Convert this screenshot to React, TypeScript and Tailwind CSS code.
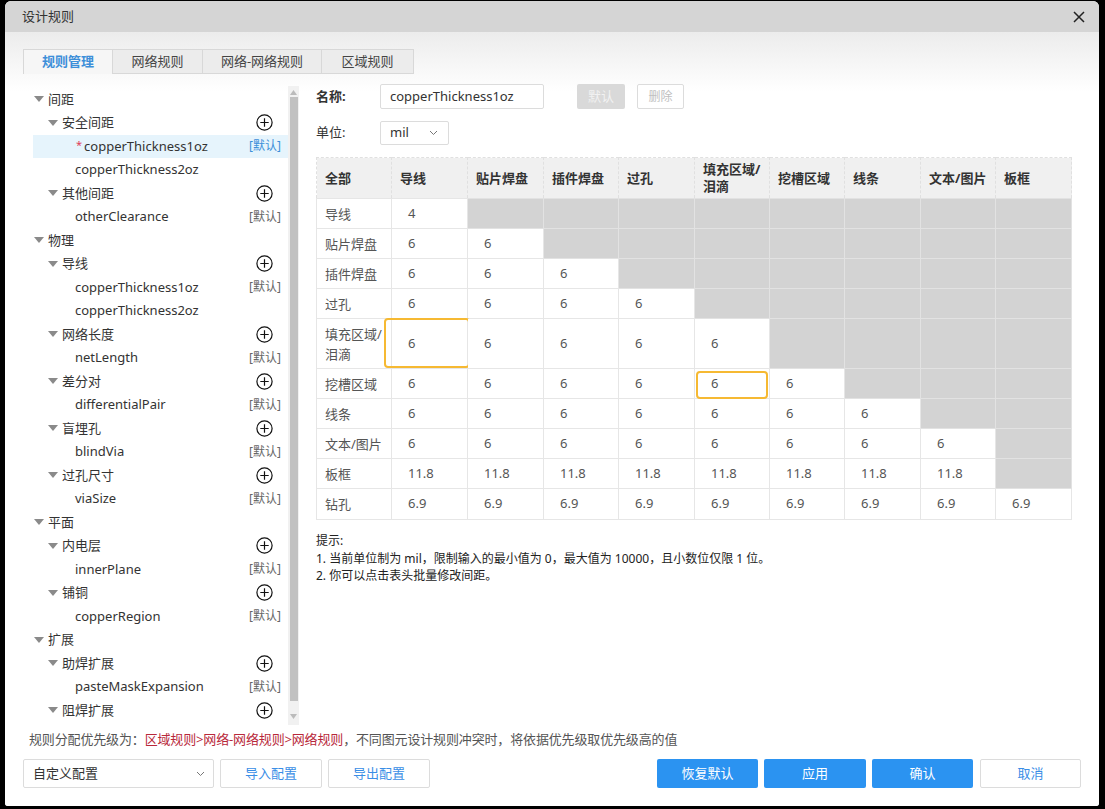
import React from "react";

const FONT = "[font-family:'Noto_Sans','Noto_Sans_CJK_SC',sans-serif]";

type TreeRow = { lv: number; text: string; plus?: boolean; tag?: string; sel?: boolean };

const tree: TreeRow[] = [
  { lv: 0, text: "间距" },
  { lv: 1, text: "安全间距", plus: true },
  { lv: 2, text: "copperThickness1oz", tag: "[默认]", sel: true },
  { lv: 2, text: "copperThickness2oz" },
  { lv: 1, text: "其他间距", plus: true },
  { lv: 2, text: "otherClearance", tag: "[默认]" },
  { lv: 0, text: "物理" },
  { lv: 1, text: "导线", plus: true },
  { lv: 2, text: "copperThickness1oz", tag: "[默认]" },
  { lv: 2, text: "copperThickness2oz" },
  { lv: 1, text: "网络长度", plus: true },
  { lv: 2, text: "netLength", tag: "[默认]" },
  { lv: 1, text: "差分对", plus: true },
  { lv: 2, text: "differentialPair", tag: "[默认]" },
  { lv: 1, text: "盲埋孔", plus: true },
  { lv: 2, text: "blindVia", tag: "[默认]" },
  { lv: 1, text: "过孔尺寸", plus: true },
  { lv: 2, text: "viaSize", tag: "[默认]" },
  { lv: 0, text: "平面" },
  { lv: 1, text: "内电层", plus: true },
  { lv: 2, text: "innerPlane", tag: "[默认]" },
  { lv: 1, text: "铺铜", plus: true },
  { lv: 2, text: "copperRegion", tag: "[默认]" },
  { lv: 0, text: "扩展" },
  { lv: 1, text: "助焊扩展", plus: true },
  { lv: 2, text: "pasteMaskExpansion", tag: "[默认]" },
  { lv: 1, text: "阻焊扩展", plus: true },
];

function Tri() {
  return (
    <svg width="10" height="6" viewBox="0 0 10 6" className="shrink-0">
      <path d="M0 0 L10 0 L5 6 Z" fill="#8a8a8a" />
    </svg>
  );
}

function Plus() {
  return (
    <svg width="17" height="17" viewBox="0 0 17 17">
      <circle cx="8.5" cy="8.5" r="7.6" fill="none" stroke="#111" strokeWidth="1.2" />
      <path d="M8.5 4.3 V12.7 M4.3 8.5 H12.7" stroke="#111" strokeWidth="1.2" />
    </svg>
  );
}

function Chevron() {
  return (
    <svg width="9" height="6" viewBox="0 0 9 6">
      <path d="M1 1 L4.5 4.5 L8 1" fill="none" stroke="#777" strokeWidth="1" />
    </svg>
  );
}

const cols = ["导线", "贴片焊盘", "插件焊盘", "过孔", "填充区域/泪滴", "挖槽区域", "线条", "文本/图片", "板框"];
const widths = [75, 76, 76, 75, 76, 75, 75, 76, 75, 76];

type Row = { label: React.ReactNode; h: number; vals: number; v: string };
const rows: Row[] = [
  { label: "导线", h: 30, vals: 1, v: "4" },
  { label: "贴片焊盘", h: 30, vals: 2, v: "6" },
  { label: "插件焊盘", h: 30, vals: 3, v: "6" },
  { label: "过孔", h: 30, vals: 4, v: "6" },
  { label: <>填充区域/<br />泪滴</>, h: 50, vals: 5, v: "6" },
  { label: "挖槽区域", h: 30, vals: 6, v: "6" },
  { label: "线条", h: 30, vals: 7, v: "6" },
  { label: "文本/图片", h: 30, vals: 8, v: "6" },
  { label: "板框", h: 30, vals: 8, v: "11.8" },
  { label: "钻孔", h: 31, vals: 9, v: "6.9" },
];

export default function App() {
  return (
    <div className={`w-[1105px] h-[809px] bg-black ${FONT} overflow-hidden`}>
      <div className="ml-[5px] mt-[1px] w-[1094px] h-[805px] rounded-t-[6px] rounded-b-[3px] overflow-hidden bg-white flex flex-col">
        {/* title bar */}
        <div className="h-[31px] bg-[#d5d5d5] flex items-center justify-between pl-[17px] pr-[14px] shrink-0">
          <span className="text-[13px] text-[#333]">设计规则</span>
          <svg width="12" height="12" viewBox="0 0 12 12">
            <path d="M1 1 L11 11 M11 1 L1 11" stroke="#222" strokeWidth="1.5" />
          </svg>
        </div>
        {/* body */}
        <div className="flex-1 flex flex-col bg-[linear-gradient(#ececec_0px,#ffffff_60px,#ffffff_100%)] px-[18px] pt-[17px]">
          {/* tabs */}
          <div className="flex h-[25px] shrink-0">
            <div className="w-[90px] flex items-center justify-center bg-[#f6f6f6] border border-b-0 border-[#d8d8d8] text-[13px] font-bold text-[#3d8fd9]">规则管理</div>
            <div className="w-[90px] flex items-center justify-center bg-[#ececec] border-t border-r border-b border-[#d8d8d8] text-[13px] text-[#444]">网络规则</div>
            <div className="w-[119px] flex items-center justify-center bg-[#ececec] border-t border-r border-b border-[#d8d8d8] text-[13px] text-[#444]">网络-网络规则</div>
            <div className="w-[92px] flex items-center justify-center bg-[#ececec] border-t border-r border-b border-[#d8d8d8] text-[13px] text-[#444]">区域规则</div>
          </div>
          {/* content */}
          <div className="flex mt-[10px]">
            {/* tree */}
            <div className="w-[277px] h-[639px] mt-[2px] flex shrink-0">
              <div className="w-[10px]" />
              <div className="flex-1 overflow-hidden pt-[1.5px]">
                {tree.map((r, i) => (
                  <div
                    key={i}
                    className={`h-[23.5px] flex items-center text-[13px] text-[#333] ${r.sel ? "bg-[#e6f4fc]" : ""} ${r.lv === 0 ? "pl-[1px]" : r.lv === 1 ? "pl-[15px]" : r.sel ? "pl-[43px]" : "pl-[42px]"}`}
                  >
                    {r.lv < 2 && <Tri />}
                    <span className={`${r.lv < 2 ? "ml-[4px]" : ""} flex-1 whitespace-nowrap`}>
                      {r.sel && <span className="text-[#e0405a] text-[11px] mr-[2px] relative top-[-2px]">*</span>}
                      {r.text}
                    </span>
                    {r.plus && (
                      <span className="pr-[15px] flex items-center">
                        <Plus />
                      </span>
                    )}
                    {r.tag && (
                      <span className={`pr-[7px] text-[12px] ${r.sel ? "text-[#3d8fd9]" : "text-[#666]"}`}>{r.tag}</span>
                    )}
                  </div>
                ))}
              </div>
              {/* scrollbar */}
              <div className="w-[11px] bg-[#f1f1f1] flex flex-col items-center">
                <svg width="7" height="5" viewBox="0 0 7 5" className="mt-[4px]">
                  <path d="M0 5 L3.5 0 L7 5 Z" fill="#bbb" />
                </svg>
                <div className="w-[8px] mt-[2px] h-[604px] bg-[#c1c1c1]" />
                <div className="flex-1" />
                <svg width="7" height="5" viewBox="0 0 7 5" className="mb-[6px]">
                  <path d="M0 0 L3.5 5 L7 0 Z" fill="#bbb" />
                </svg>
              </div>
              <div className="w-[1px]" />
            </div>
            {/* right panel */}
            <div className="ml-[16px] flex-1">
              <div className="flex items-center h-[25px]">
                <span className="w-[64px] text-[13px] font-bold text-[#333]">名称:</span>
                <div className="w-[164px] h-[25px] border border-[#dcdcdc] rounded-[2px] flex items-center pl-[9px] text-[13px] text-[#333] bg-white">copperThickness1oz</div>
                <div className="ml-[33px] w-[48px] h-[25px] rounded-[2px] bg-[#d9d9d9] flex items-center justify-center text-[13px] text-[#f2f2f2]">默认</div>
                <div className="ml-[12px] w-[47px] h-[25px] rounded-[2px] border border-[#dcdcdc] bg-white flex items-center justify-center text-[12px] text-[#c0c0c0]">删除</div>
              </div>
              <div className="flex items-center h-[24px] mt-[12px]">
                <span className="w-[64px] text-[13px] text-[#333]">单位:</span>
                <div className="w-[69px] h-[24px] border border-[#dcdcdc] rounded-[2px] flex items-center justify-between pl-[9px] pr-[10px] text-[13px] text-[#333] bg-white">
                  <span>mil</span>
                  <Chevron />
                </div>
              </div>
              {/* table */}
              <table className="mt-[12px] table-fixed border-collapse text-[13px]" style={{ width: 755 }}>
                <colgroup>
                  {widths.map((w, i) => (
                    <col key={i} style={{ width: w }} />
                  ))}
                </colgroup>
                <thead>
                  <tr className="h-[41px] bg-[#f0f0f0]">
                    <th className="text-left font-bold text-[#333] pl-[8px] border border-dashed border-[#e0e0e0] align-middle leading-[17px]">全部</th>
                    {cols.map((c, i) => (
                      <th key={i} className="text-left font-bold text-[#333] pl-[8px] border border-dashed border-[#e0e0e0] align-middle leading-[17px]">
                        {c === "填充区域/泪滴" ? (
                          <>
                            填充区域/
                            <br />
                            泪滴
                          </>
                        ) : (
                          c
                        )}
                      </th>
                    ))}
                  </tr>
                </thead>
                <tbody>
                  {rows.map((r, ri) => (
                    <tr key={ri} style={{ height: r.h }}>
                      <td className="pl-[8px] text-[#555] border border-[#e6e6e6] leading-[20px]">{r.label}</td>
                      {Array.from({ length: 9 }).map((_, ci) => {
                        const has = ci < r.vals;
                        const hl1 = ri === 4 && ci === 0;
                        const hl2 = ri === 5 && ci === 4;
                        return (
                          <td
                            key={ci}
                            className={`relative border ${has ? "border-[#e6e6e6] bg-white pl-[16px] text-[#555]" : "border-[#e2e2e2] bg-[#d3d3d3]"}`}
                          >
                            {has ? r.v : ""}
                            {hl1 && <div className="absolute left-[-8px] right-[-3px] top-[-1px] bottom-[0px] border-2 border-[#f6b932] rounded-[4px]" />}
                            {hl2 && <div className="absolute left-[1px] right-[1px] top-[2px] bottom-[-1px] border-2 border-[#f6b932] rounded-[4px]" />}
                          </td>
                        );
                      })}
                    </tr>
                  ))}
                </tbody>
              </table>
              <div className="mt-[12px] text-[12px] text-[#222] leading-[17.5px]">
                <div>提示:</div>
                <div>1. 当前单位制为 mil，限制输入的最小值为 0，最大值为 10000，且小数位仅限 1 位。</div>
                <div>2. 你可以点击表头批量修改间距。</div>
              </div>
            </div>
          </div>
          {/* priority */}
          <div className="mt-[6px] h-[18px] flex items-center pl-[6px] text-[13px] text-[#555] whitespace-nowrap tracking-[-0.15px]">
            <span>规则分配优先级为：</span>
            <span className="text-[#b8283a]">区域规则&gt;网络-网络规则&gt;网络规则</span>
            <span>，不同图元设计规则冲突时，将依据优先级取优先级高的值</span>
          </div>
          {/* buttons */}
          <div className="mt-[10px] flex items-center h-[29px]">
            <div className="w-[191px] h-[29px] border border-[#dcdcdc] rounded-[2px] flex items-center justify-between pl-[9px] pr-[8px] text-[13px] text-[#333] bg-white">
              <span>自定义配置</span>
              <Chevron />
            </div>
            <div className="ml-[6px] w-[102px] h-[29px] border border-[#dcdcdc] rounded-[2px] flex items-center justify-center text-[13px] text-[#3a8ee6] bg-white">导入配置</div>
            <div className="ml-[6px] w-[102px] h-[29px] border border-[#dcdcdc] rounded-[2px] flex items-center justify-center text-[13px] text-[#3a8ee6] bg-white">导出配置</div>
            <div className="flex-1" />
            <div className="w-[101px] h-[29px] rounded-[2px] bg-[#2b93f1] flex items-center justify-center text-[13px] text-white">恢复默认</div>
            <div className="ml-[6px] w-[102px] h-[29px] rounded-[2px] bg-[#2b93f1] flex items-center justify-center text-[13px] text-white">应用</div>
            <div className="ml-[6px] w-[101px] h-[29px] rounded-[2px] bg-[#2b93f1] flex items-center justify-center text-[13px] text-white">确认</div>
            <div className="ml-[7px] w-[101px] h-[29px] border border-[#dcdcdc] rounded-[2px] flex items-center justify-center text-[13px] text-[#3a8ee6] bg-white">取消</div>
          </div>
        </div>
      </div>
    </div>
  );
}
